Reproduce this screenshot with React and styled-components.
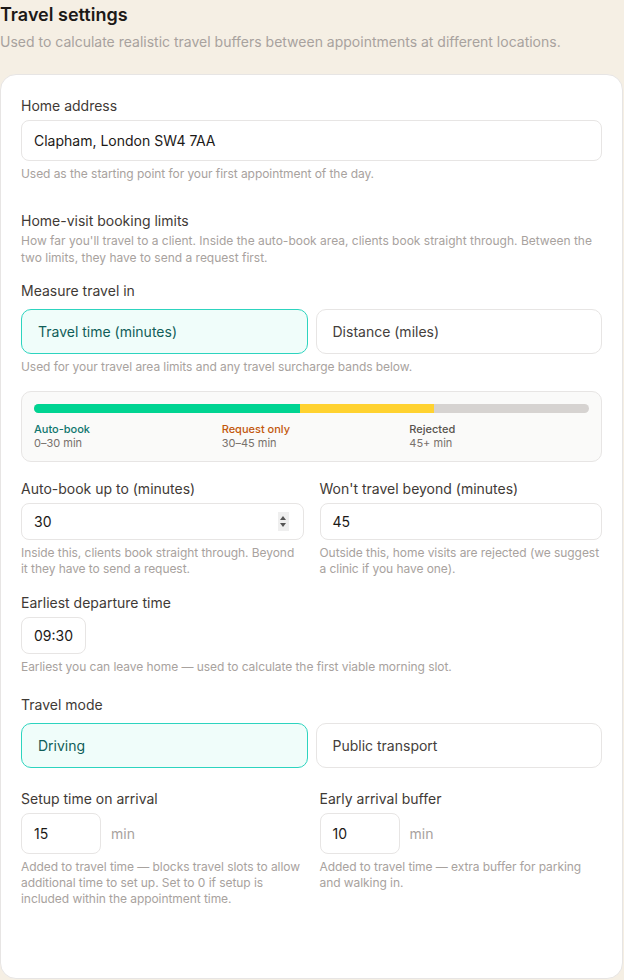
import styled, { createGlobalStyle } from "styled-components";

const GlobalStyle = createGlobalStyle`
  * { box-sizing: border-box; }
  body {
    margin: 0;
    background: #f5efe4;
    font-family: Inter, "Noto Sans", sans-serif;
    color: #1c1917;
  }
`;

const Page = styled.div`
  padding: 4px 1px 0 0;
`;

const Title = styled.h2`
  margin: 0;
  font-size: 18px;
  line-height: 22px;
  font-weight: 600;
  color: #1c1917;
`;

const Subtitle = styled.p`
  margin: 6px 0 0;
  font-size: 14px;
  line-height: 20px;
  color: #a8a29e;
`;

const Card = styled.div`
  margin: 22px 0 0 0;
  background: #fff;
  border: 1px solid #e7e5e4;
  border-radius: 16px;
  padding: 21px 20px 71px;
`;

const Field = styled.div`
  margin-top: ${({ gap }) => gap || 0}px;
`;

const Label = styled.div`
  font-size: 14px;
  line-height: 20px;
  font-weight: 400;
  color: #3f3a36;
  margin-bottom: ${({ after }) => (after === undefined ? 4 : after)}px;
`;

const Description = styled.div`
  font-size: 12px;
  line-height: 17px;
  color: #a8a29e;
`;

const Help = styled.div`
  margin-top: 5px;
  font-size: 12px;
  line-height: 16px;
  letter-spacing: -0.06px;
  color: #a8a29e;
`;

const InputBox = styled.div`
  position: relative;
  width: ${({ w }) => (w ? `${w}px` : "100%")};
  height: ${({ h }) => h || 37}px;
  border: 1px solid #e7e5e4;
  border-radius: 8px;
  background: #fff;
  display: flex;
  align-items: center;
  padding: 0 12px;
  font-size: 14px;
  color: #1c1917;
  flex-shrink: 0;
`;

const Spinner = styled.div`
  position: absolute;
  right: 14px;
  top: 8px;
  width: 11px;
  height: 19px;
  background: #efefef;
  display: flex;
  flex-direction: column;
  align-items: center;
  justify-content: center;
  gap: 3px;
`;

const Tri = styled.div`
  width: 0;
  height: 0;
  border-left: 3.5px solid transparent;
  border-right: 3.5px solid transparent;
  ${({ down }) =>
    down
      ? "border-top: 4px solid #555;"
      : "border-bottom: 4px solid #555;"}
`;

const ToggleRow = styled.div`
  display: grid;
  grid-template-columns: 1fr 1fr;
  gap: 8px;
`;

const Toggle = styled.div`
  height: 45px;
  border-radius: 10px;
  border: 1px solid ${({ active }) => (active ? "#2dd4bf" : "#e7e5e4")};
  background: ${({ active }) => (active ? "#f0fdfa" : "#fff")};
  color: ${({ active }) => (active ? "#115e59" : "#44403c")};
  font-size: 14px;
  font-weight: 400;
  display: flex;
  align-items: center;
  padding: 0 16px;
`;

const Panel = styled.div`
  margin-top: 16px;
  border: 1px solid #e7e5e4;
  background: #fafaf9;
  border-radius: 10px;
  padding: 12px 12px 11px;
`;

const Bar = styled.div`
  display: flex;
  height: 9px;
  border-radius: 5px;
  overflow: hidden;
  background: #d6d3d1;
`;

const Segment = styled.div`
  background: ${({ color }) => color};
`;

const Legend = styled.div`
  margin-top: 9px;
  display: grid;
  grid-template-columns: repeat(3, 1fr);
  gap: 8px;
`;

const LegendName = styled.div`
  font-size: 11px;
  line-height: 14px;
  font-weight: 500;
  color: ${({ color }) => color};
`;

const LegendRange = styled.div`
  font-size: 11px;
  line-height: 14px;
  color: #78716c;
`;

const TwoCol = styled.div`
  margin-top: ${({ gap }) => gap || 0}px;
  display: grid;
  grid-template-columns: 1fr 1fr;
  gap: 16px;
`;

const Inline = styled.div`
  display: flex;
  align-items: center;
  gap: 10px;
`;

const Unit = styled.span`
  font-size: 14px;
  color: #a8a29e;
`;

export default function App() {
  return (
    <Page>
      <GlobalStyle />
      <Title>Travel settings</Title>
      <Subtitle>
        Used to calculate realistic travel buffers between appointments at different locations.
      </Subtitle>
      <Card>
        <Field>
          <Label>Home address</Label>
          <InputBox h={41}>Clapham, London SW4 7AA</InputBox>
          <Help>Used as the starting point for your first appointment of the day.</Help>
        </Field>

        <Field gap={29}>
          <Label after={1}>Home-visit booking limits</Label>
          <Description>
            How far you'll travel to a client. Inside the auto-book area, clients book straight
            through. Between the two limits, they have to send a request first.
          </Description>
        </Field>

        <Field gap={15}>
          <Label after={8}>Measure travel in</Label>
          <ToggleRow>
            <Toggle active>Travel time (minutes)</Toggle>
            <Toggle>Distance (miles)</Toggle>
          </ToggleRow>
          <Help>Used for your travel area limits and any travel surcharge bands below.</Help>
        </Field>

        <Panel>
          <Bar>
            <Segment color="#00d492" style={{ width: "48%" }} />
            <Segment color="#ffd230" style={{ width: "24%" }} />
          </Bar>
          <Legend>
            <div>
              <LegendName color="#0f766e">Auto-book</LegendName>
              <LegendRange>0–30 min</LegendRange>
            </div>
            <div>
              <LegendName color="#c2570c">Request only</LegendName>
              <LegendRange>30–45 min</LegendRange>
            </div>
            <div>
              <LegendName color="#57534e">Rejected</LegendName>
              <LegendRange>45+ min</LegendRange>
            </div>
          </Legend>
        </Panel>

        <TwoCol gap={17}>
          <div>
            <Label>Auto-book up to (minutes)</Label>
            <InputBox>
              30
              <Spinner>
                <Tri />
                <Tri down />
              </Spinner>
            </InputBox>
            <Help>Inside this, clients book straight through. Beyond it they have to send a request.</Help>
          </div>
          <div>
            <Label>Won't travel beyond (minutes)</Label>
            <InputBox>45</InputBox>
            <Help>Outside this, home visits are rejected (we suggest a clinic if you have one).</Help>
          </div>
        </TwoCol>

        <Field gap={16}>
          <Label>Earliest departure time</Label>
          <InputBox w={65}>09:30</InputBox>
          <Help>Earliest you can leave home — used to calculate the first viable morning slot.</Help>
        </Field>

        <Field gap={20}>
          <Label after={8}>Travel mode</Label>
          <ToggleRow>
            <Toggle active>Driving</Toggle>
            <Toggle>Public transport</Toggle>
          </ToggleRow>
        </Field>

        <TwoCol gap={21}>
          <div>
            <Label>Setup time on arrival</Label>
            <Inline>
              <InputBox w={80} h={41}>15</InputBox>
              <Unit>min</Unit>
            </Inline>
            <Help>
              Added to travel time — blocks travel slots to allow additional time to set up. Set to 0
              if setup is included within the appointment time.
            </Help>
          </div>
          <div>
            <Label>Early arrival buffer</Label>
            <Inline>
              <InputBox w={80} h={41}>10</InputBox>
              <Unit>min</Unit>
            </Inline>
            <Help>Added to travel time — extra buffer for parking and walking in.</Help>
          </div>
        </TwoCol>
      </Card>
    </Page>
  );
}
